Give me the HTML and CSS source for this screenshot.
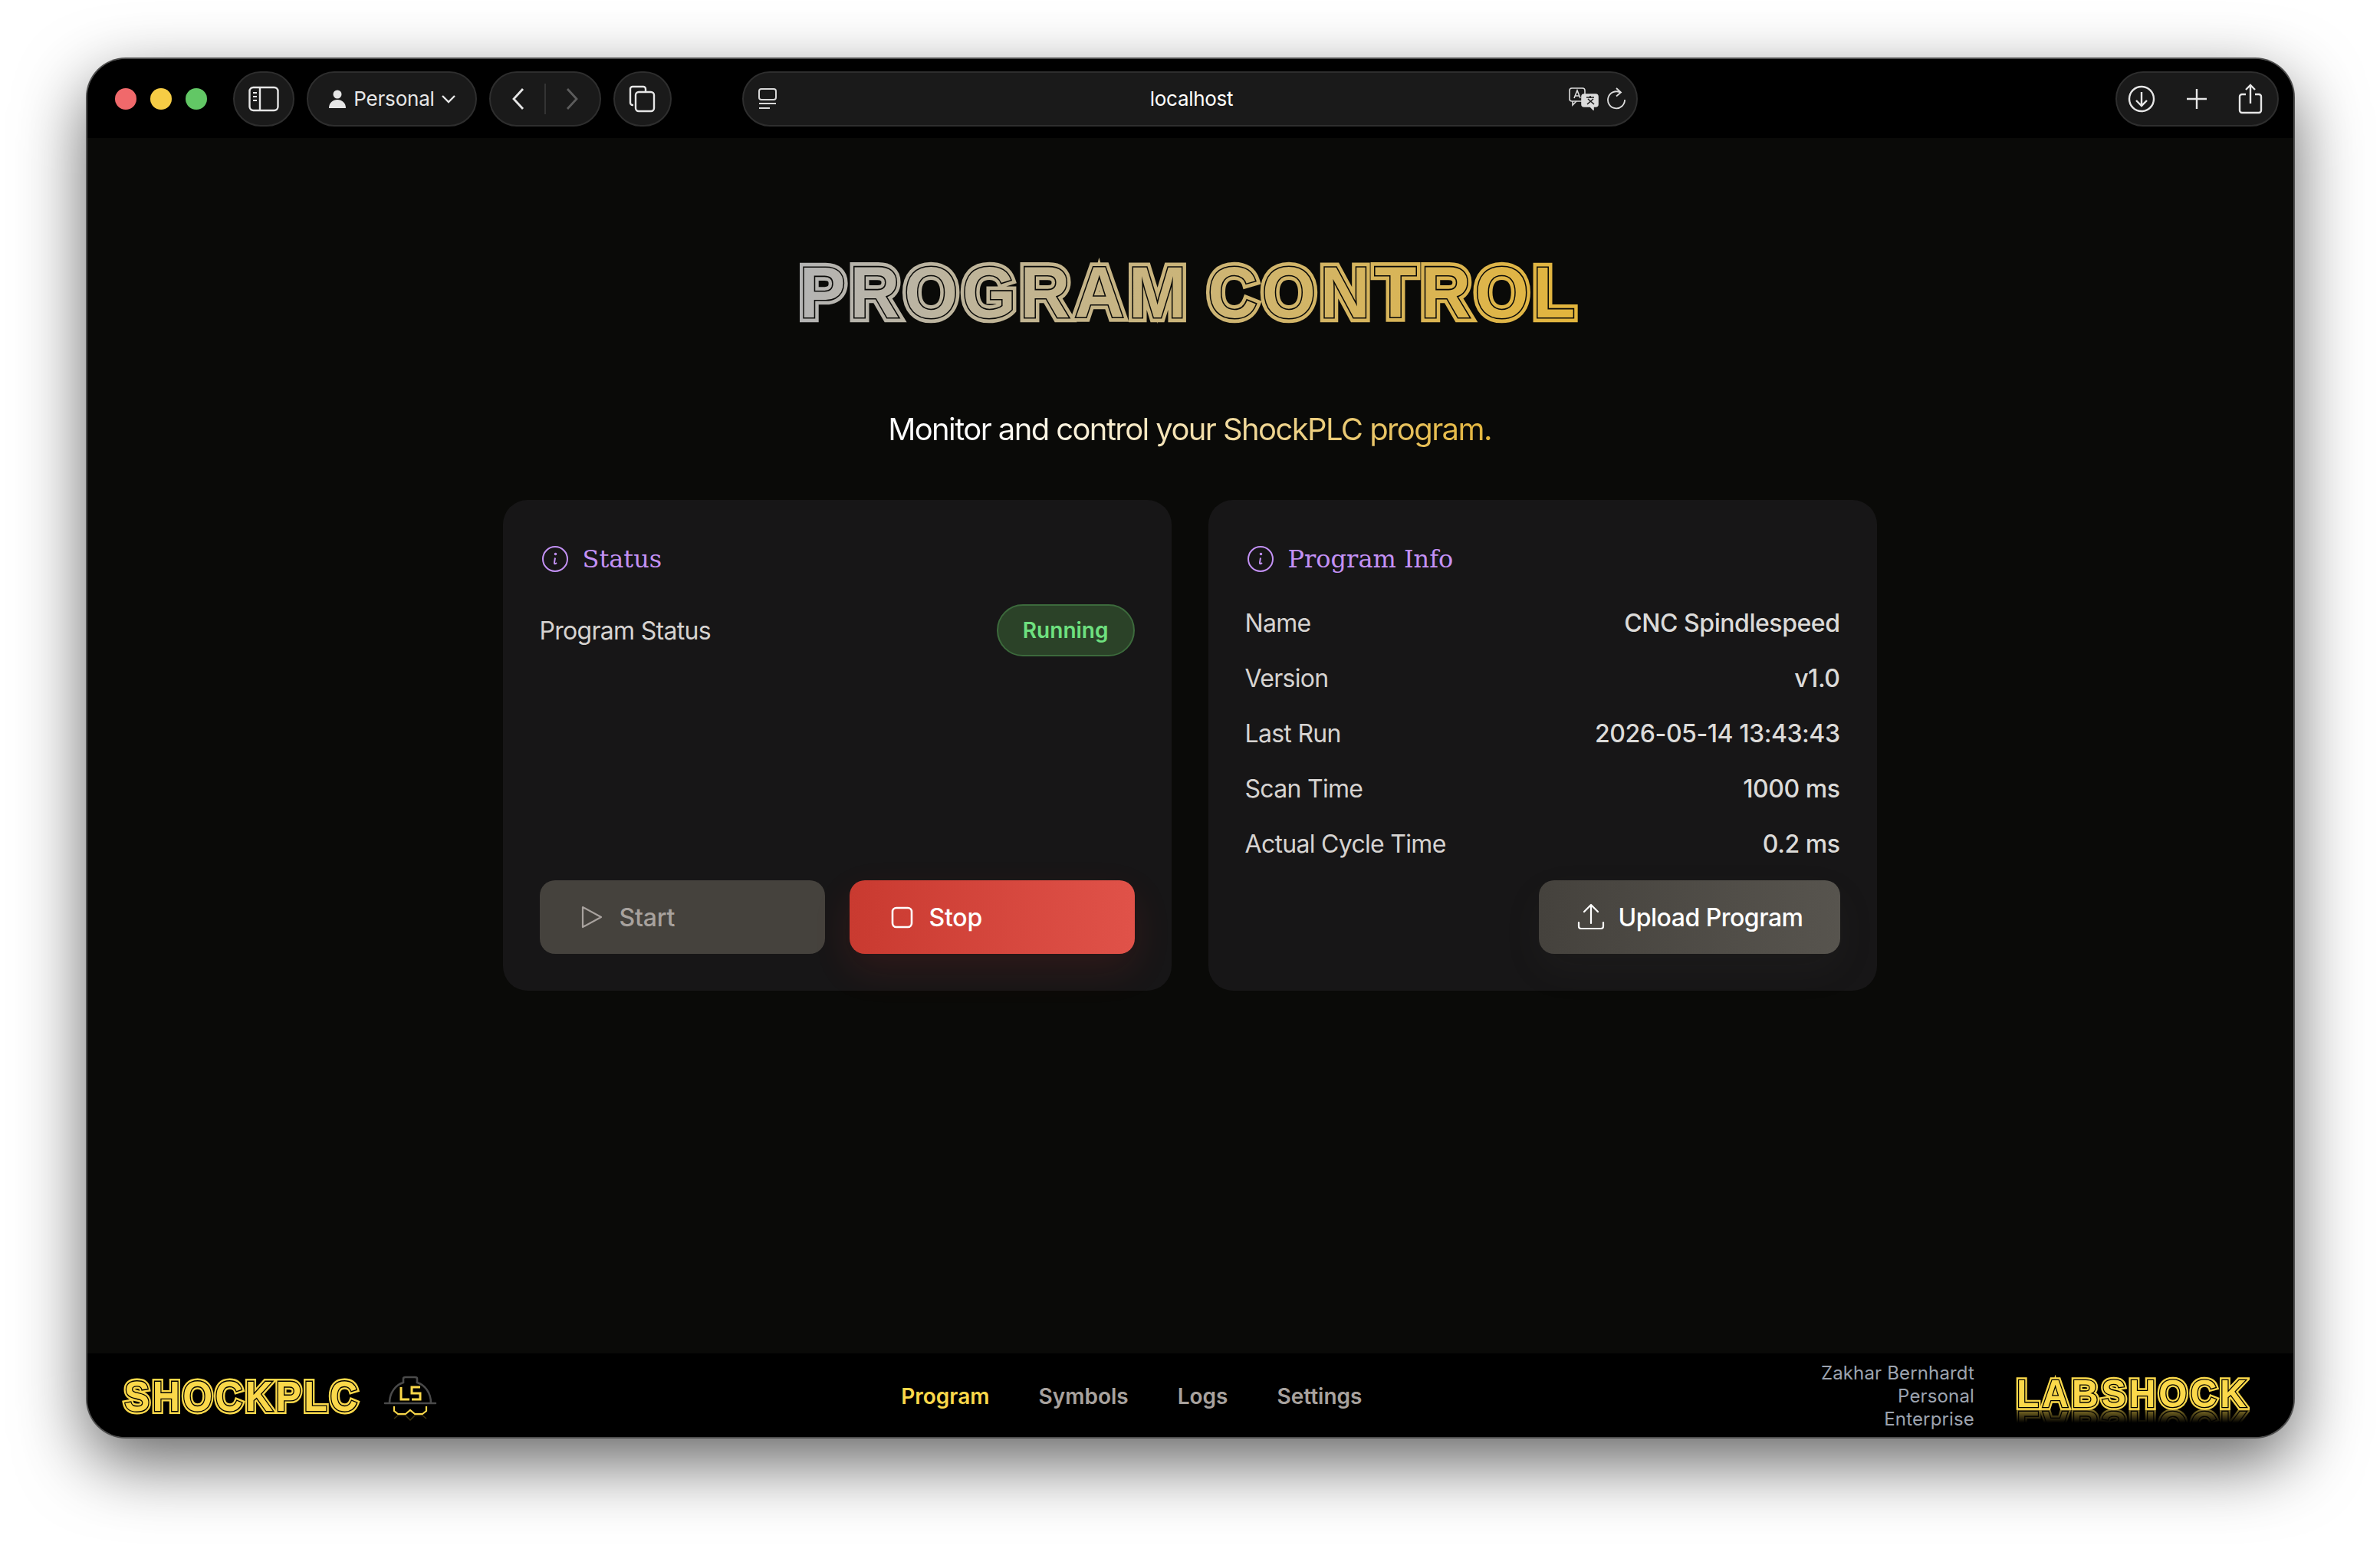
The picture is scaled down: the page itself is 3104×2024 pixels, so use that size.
FILE: index.html
```html
<!DOCTYPE html>
<html lang="en">
<head>
  <meta charset="UTF-8" />
  <title>Program Control</title>
  <link rel="stylesheet" href="styles.css">
</head>
<body>

  <div class="window">
    <header class="toolbar">
      <div class="lights">
        <span class="light red"></span>
        <span class="light yellow"></span>
        <span class="light green"></span>
      </div>
      <div class="pill pill-side">
        <svg width="40" height="36" viewBox="0 0 40 36" fill="none" stroke="#e6e6e6" stroke-width="2.4"><rect x="1.5" y="3" width="37" height="30" rx="5"/><path d="M15 3v30"/><path d="M6 10h5M6 15h5M6 20h5" stroke-width="2.2"/></svg>
      </div>
      <div class="pill pill-profile">
        <svg width="26" height="28" viewBox="0 0 26 28" fill="#e6e6e6"><circle cx="13" cy="8" r="5.5"/><path d="M2 26c0-7 5-11 11-11s11 4 11 11z"/></svg>
        <span>Personal</span>
        <svg width="20" height="12" viewBox="0 0 20 12" fill="none" stroke="#e6e6e6" stroke-width="2.4"><path d="M2 2l8 8 8-8"/></svg>
      </div>
      <div class="pill pill-nav">
        <svg width="20" height="30" viewBox="0 0 20 30" fill="none" stroke="#e6e6e6" stroke-width="2.8"><path d="M16 2L4 15l12 13"/></svg>
        <i class="nav-sep"></i>
        <svg width="20" height="30" viewBox="0 0 20 30" fill="none" stroke="#5c5c5c" stroke-width="2.8"><path d="M4 2l12 13L4 28"/></svg>
      </div>
      <div class="pill pill-tabs">
        <svg width="36" height="36" viewBox="0 0 36 36" fill="none" stroke="#e6e6e6" stroke-width="2.4"><path d="M6 26H5a3 3 0 0 1-3-3V5a3 3 0 0 1 3-3h14a3 3 0 0 1 3 3v3"/><rect x="9" y="9" width="24" height="25" rx="4"/></svg>
      </div>
      <div class="pill url-bar">
        <svg class="url-site" width="26" height="30" viewBox="0 0 26 30" fill="none" stroke="#d8d8d8" stroke-width="2"><rect x="2" y="2" width="22" height="14" rx="3"/><path d="M2 21h22M2 27h14"/></svg>
        <span class="url-text">localhost</span>
        <svg class="url-translate" width="40" height="30" viewBox="0 0 40 30" fill="none" stroke="#dcdcdc" stroke-width="1.6"><rect x="1" y="1" width="20" height="17" rx="3"/><path d="M5 18v5l5-5"/><path d="M7 14l4-10 4 10M8.500 11h5"/><rect x="17" y="9" width="21" height="16" rx="3" fill="#dcdcdc"/><path d="M32 25v4l-4-4" fill="#dcdcdc"/><path d="M23 13h10M28 11v3M24 22l8-7M33 22l-8-7" stroke="#1a1a1a"/></svg>
        <svg width="26" height="32" viewBox="0 0 26 32" fill="none" stroke="#dcdcdc" stroke-width="1.8"><path d="M17 7.500A11 11 0 1 0 23 17"/><path d="M12 2l6 5.500-6 5"/></svg>
      </div>
      <div class="pill pill-actions">
        <svg width="36" height="36" viewBox="0 0 36 36" fill="none" stroke="#e6e6e6" stroke-width="2.4"><circle cx="18" cy="18" r="16"/><path d="M18 9v18M11 20l7 7 7-7"/></svg>
        <svg width="30" height="30" viewBox="0 0 30 30" fill="none" stroke="#e6e6e6" stroke-width="2.4"><path d="M15 2v26M2 15h26"/></svg>
        <svg width="32" height="40" viewBox="0 0 32 40" fill="none" stroke="#e6e6e6" stroke-width="2.4"><path d="M10 14H5a3 3 0 0 0-3 3v18a3 3 0 0 0 3 3h22a3 3 0 0 0 3-3V17a3 3 0 0 0-3-3h-5"/><path d="M16 26V2M10 8l6-6 6 6"/></svg>
      </div>
    </header>

    <main class="content">
      <h1 class="page-title" data-text="PROGRAM CONTROL">PROGRAM CONTROL</h1>
      <p class="subtitle">Monitor and control your ShockPLC program.</p>

      <div class="cards">
        <section class="card">
          <h2 class="card-title">
            <svg width="40" height="40" viewBox="0 0 40 40" fill="none" stroke="#c391f5" stroke-width="2"><circle cx="20" cy="20" r="16"/><path d="M20 18.500c-.4 3-1.200 5.500-1 7 .2 1 1.500 1 3-.5"/><circle cx="20.500" cy="13.500" r=".8"/></svg>
            Status
          </h2>
          <div class="status-row">
            <span>Program Status</span>
            <span class="badge">Running</span>
          </div>
          <div class="spacer"></div>
          <div class="btn-row">
            <button class="btn btn-start">
              <svg width="40" height="40" viewBox="0 0 40 40" fill="none" stroke="#a8a29e" stroke-width="2.200" stroke-linejoin="round"><path d="M8 7l24 13L8 33z"/></svg>
              Start
            </button>
            <button class="btn btn-stop">
              <svg width="40" height="40" viewBox="0 0 40 40" fill="none" stroke="#fff" stroke-width="2.600"><rect x="8" y="8" width="25" height="25" rx="5"/></svg>
              Stop
            </button>
          </div>
        </section>

        <section class="card">
          <h2 class="card-title">
            <svg width="40" height="40" viewBox="0 0 40 40" fill="none" stroke="#c391f5" stroke-width="2"><circle cx="20" cy="20" r="16"/><path d="M20 18.500c-.4 3-1.200 5.500-1 7 .2 1 1.500 1 3-.5"/><circle cx="20.500" cy="13.500" r=".8"/></svg>
            Program Info
          </h2>
          <dl class="info-list">
            <div class="info-row"><dt>Name</dt><dd>CNC Spindlespeed</dd></div>
            <div class="info-row"><dt>Version</dt><dd>v1.0</dd></div>
            <div class="info-row"><dt>Last Run</dt><dd>2026-05-14 13:43:43</dd></div>
            <div class="info-row"><dt>Scan Time</dt><dd>1000 ms</dd></div>
            <div class="info-row"><dt>Actual Cycle Time</dt><dd>0.2 ms</dd></div>
          </dl>
          <div class="upload-row">
            <button class="btn btn-upload">
              <svg width="40" height="40" viewBox="0 0 40 40" fill="none" stroke="#fff" stroke-width="2.200" stroke-linecap="round" stroke-linejoin="round"><path d="M20 28V5M11 13l9-9 9 9"/><path d="M4 27v5a3 3 0 0 0 3 3h26a3 3 0 0 0 3-3v-5"/></svg>
              Upload Program
            </button>
          </div>
        </section>
      </div>
    </main>

    <footer class="footer">
      <div class="brand">
        <span class="brand-name shockplc" data-text="SHOCKPLC">SHOCKPLC</span>
        <svg class="brand-mark" width="70" height="60" viewBox="0 0 70 60" fill="none">
          <path d="M2 36h66M8 36c0-14 8-24 18-27V4q0-2 3-2h12q3 0 3 2v5c10 3 18 13 18 27" stroke="#4a4a4a" stroke-width="2.600" stroke-linecap="round"/>
          <path d="M14 40v6l5 4h10l6-5 6 5h10l5-4v-6" stroke="#fbd84a" stroke-width="2.200"/>
          <path d="M14 56l5-4h10l6 6 6-6h10l5 4" stroke="#fbd84a" stroke-width="1.500" opacity=".25"/>
          <path d="M23 15v16h11M48 15H37v8h11v8H37" stroke="#fbd84a" stroke-width="3"/>
        </svg>
      </div>
      <nav class="nav">
        <a class="nav-link active">Program</a>
        <a class="nav-link">Symbols</a>
        <a class="nav-link">Logs</a>
        <a class="nav-link">Settings</a>
      </nav>
      <div class="owner">
        <div class="owner-text">Zakhar Bernhardt<br>Personal<br>Enterprise</div>
        <span class="brand-name labshock" data-text="LABSHOCK">LABSHOCK</span>
      </div>
    </footer>
  </div>

</body>
</html>
```

FILE: styles.css
```css
* {
  box-sizing: border-box;
  margin: 0;
  padding: 0;
}
html, body {
  width: 100%;
  height: 100%;
  overflow: hidden;
}
body {
  background: #fff;
  font-family: 'Inter', 'Liberation Sans', sans-serif;
  padding: 77px 113px 150px 114px;
}
.window {
  height: 100%;
  display: flex;
  flex-direction: column;
  background: #0a0a08;
  border-radius: 50px;
  overflow: hidden;
  box-shadow: 0 0 0 2px #4e4e4e, 0 32px 90px rgba(0, 0, 0, 0.62);
}

/* browser chrome */
.toolbar {
  height: 103px;
  flex: none;
  background: #000;
  display: flex;
  align-items: center;
  padding: 0 19px 0 36px;
}
.lights {
  display: flex;
  gap: 18px;
  margin-right: 34px;
}
.light {
  width: 28px;
  height: 28px;
  border-radius: 50%;
}
.red { background: #f0696b; }
.yellow { background: #f6cc45; }
.green { background: #62c765; }
.pill {
  height: 72px;
  border-radius: 36px;
  background: #1a1a1a;
  border: 2px solid #2e2e2e;
  display: flex;
  align-items: center;
  justify-content: center;
  color: #e6e6e6;
}
.pill-side { width: 80px; margin-right: 16px; }
.pill-profile {
  width: 222px;
  gap: 8px;
  font-size: 26px;
  letter-spacing: -0.2px;
  margin-right: 16px;
}
.pill-nav {
  width: 146px;
  gap: 24px;
  margin-right: 16px;
}
.nav-sep {
  width: 2px;
  height: 40px;
  background: #333;
}
.pill-tabs { width: 76px; margin-right: 92px; }
.url-bar {
  width: 1168px;
  justify-content: flex-start;
  padding: 0 12px 0 18px;
  gap: 6px;
  font-size: 26px;
  letter-spacing: -0.3px;
}
.url-text {
  flex: 1;
  text-align: center;
  color: #fff;
  padding-left: 48px;
}
.url-translate { margin-right: 4px; }
.pill-actions {
  width: 213px;
  margin-left: auto;
  gap: 39px;
  padding-right: 5px;
}

/* page */
.content {
  flex: 1;
  display: flex;
  flex-direction: column;
  align-items: center;
  padding: 156px 2px 0 0;
}
.page-title {
  font-family: 'Liberation Sans', sans-serif;
  font-size: 90px;
  font-weight: 700;
  line-height: 90px;
  letter-spacing: 5.7px;
  word-spacing: -8px;
  white-space: nowrap;
  position: relative;
  transform: scaleY(1.06);
  background: linear-gradient(90deg, #b4b4b4, #e3b53c);
  -webkit-background-clip: text;
  background-clip: text;
  color: transparent;
  -webkit-text-stroke: 12px transparent;
}
.page-title::before,
.page-title::after {
  content: attr(data-text);
  position: absolute;
  left: 0;
  top: 0;
}
.page-title::before {
  color: #0a0a08;
  -webkit-text-stroke: 3px #0a0a08;
}
.page-title::after {
  background: linear-gradient(90deg, #b4b4b4, #e3b53c);
  -webkit-background-clip: text;
  background-clip: text;
  color: transparent;
  -webkit-text-stroke: 0;
}
.subtitle {
  margin-top: 106px;
  font-size: 40px;
  line-height: 56px;
  letter-spacing: -1.6px;
  background: linear-gradient(90deg, #fff 15%, #e3b53c);
  -webkit-background-clip: text;
  background-clip: text;
  color: transparent;
}
.cards {
  width: 1792px;
  margin-top: 64px;
  display: grid;
  grid-template-columns: 1fr 1fr;
  gap: 48px;
}
.card {
  height: 640px;
  padding: 48px;
  background: #171617;
  border-radius: 32px;
  display: flex;
  flex-direction: column;
}
.card-title {
  display: flex;
  align-items: center;
  gap: 16px;
  font-family: 'DejaVu Serif', 'Liberation Serif', serif;
  font-size: 32px;
  line-height: 58px;
  font-weight: 400;
  color: #c391f5;
  margin-bottom: 30px;
}
.status-row {
  display: flex;
  align-items: center;
  justify-content: space-between;
  font-size: 32px;
  letter-spacing: -0.7px;
  color: #d6d3d1;
}
.badge {
  height: 68px;
  padding: 0 32px;
  display: flex;
  align-items: center;
  border-radius: 34px;
  background: #2b4228;
  border: 2px solid #3c6a3c;
  color: #6ee07f;
  font-size: 28px;
  font-weight: 600;
  letter-spacing: 0;
}
.spacer { flex: 1; }
.btn-row {
  display: grid;
  grid-template-columns: 1fr 1fr;
  gap: 32px;
}
.btn {
  height: 96px;
  display: flex;
  align-items: center;
  gap: 16px;
  padding: 0 48px;
  border: none;
  border-radius: 20px;
  font-family: inherit;
  font-size: 32px;
  font-weight: 500;
  letter-spacing: -0.2px;
}
.btn-start {
  background: #45423d;
  color: #a8a29e;
}
.btn-stop {
  background: linear-gradient(90deg, #c93a30, #e05249);
  color: #fff;
  box-shadow: 0 20px 50px rgba(220, 50, 40, 0.12);
}
.btn-upload {
  background: linear-gradient(90deg, #45423d, #57544e);
  color: #fff;
  letter-spacing: -0.5px;
  box-shadow: 0 20px 50px rgba(87, 84, 78, 0.08);
}
.info-list {
  display: flex;
  flex-direction: column;
  gap: 24px;
  padding-top: 1px;
  font-size: 32px;
  line-height: 48px;
}
.info-row {
  display: flex;
  justify-content: space-between;
}
.info-row dt {
  color: #d6d3d1;
  letter-spacing: -0.7px;
}
.info-row dd {
  color: #dcdbd9;
  font-weight: 500;
  letter-spacing: -0.45px;
}
.upload-row {
  margin-top: auto;
  display: flex;
  justify-content: flex-end;
}

/* footer */
.footer {
  height: 109px;
  flex: none;
  background: #000;
  display: flex;
  justify-content: space-between;
  align-items: center;
  padding: 3px 57px 0 48px;
}
.brand {
  display: flex;
  align-items: center;
  gap: 30px;
}
.brand-mark {
  margin: 6px 7px 0 0;
}
.brand-name {
  font-family: 'Liberation Sans', sans-serif;
  font-weight: 700;
  position: relative;
  color: #fbd84a;
  white-space: nowrap;
}
.brand-name::before,
.brand-name::after {
  content: attr(data-text);
  position: absolute;
  left: 0;
  top: 0;
}
.brand-name::before {
  color: #000;
  -webkit-text-stroke: 2.5px #000;
}
.brand-name::after {
  color: #fbd84a;
  -webkit-text-stroke: 0;
}
.shockplc {
  font-size: 50px;
  line-height: 50px;
  letter-spacing: 3.4px;
  -webkit-text-stroke: 7px #fbd84a;
  transform: scaleY(1.12);
}
.labshock {
  font-size: 48px;
  line-height: 48px;
  letter-spacing: 4px;
  margin-bottom: 6px;
  -webkit-text-stroke: 7px #fbd84a;
  transform: scaleY(1.05);
  -webkit-box-reflect: below -10px linear-gradient(transparent 55%, rgba(255, 255, 255, 0.7));
}
.nav {
  display: flex;
  gap: 64px;
  font-size: 28px;
  font-weight: 600;
}
.nav-link { color: #a8a29e; }
.nav-link.active { color: #fbd84a; }
.owner {
  display: flex;
  align-items: center;
  gap: 55px;
}
.owner-text {
  font-size: 24px;
  line-height: 30px;
  letter-spacing: 0.15px;
  text-align: right;
  color: #9ca3af;
}
```
